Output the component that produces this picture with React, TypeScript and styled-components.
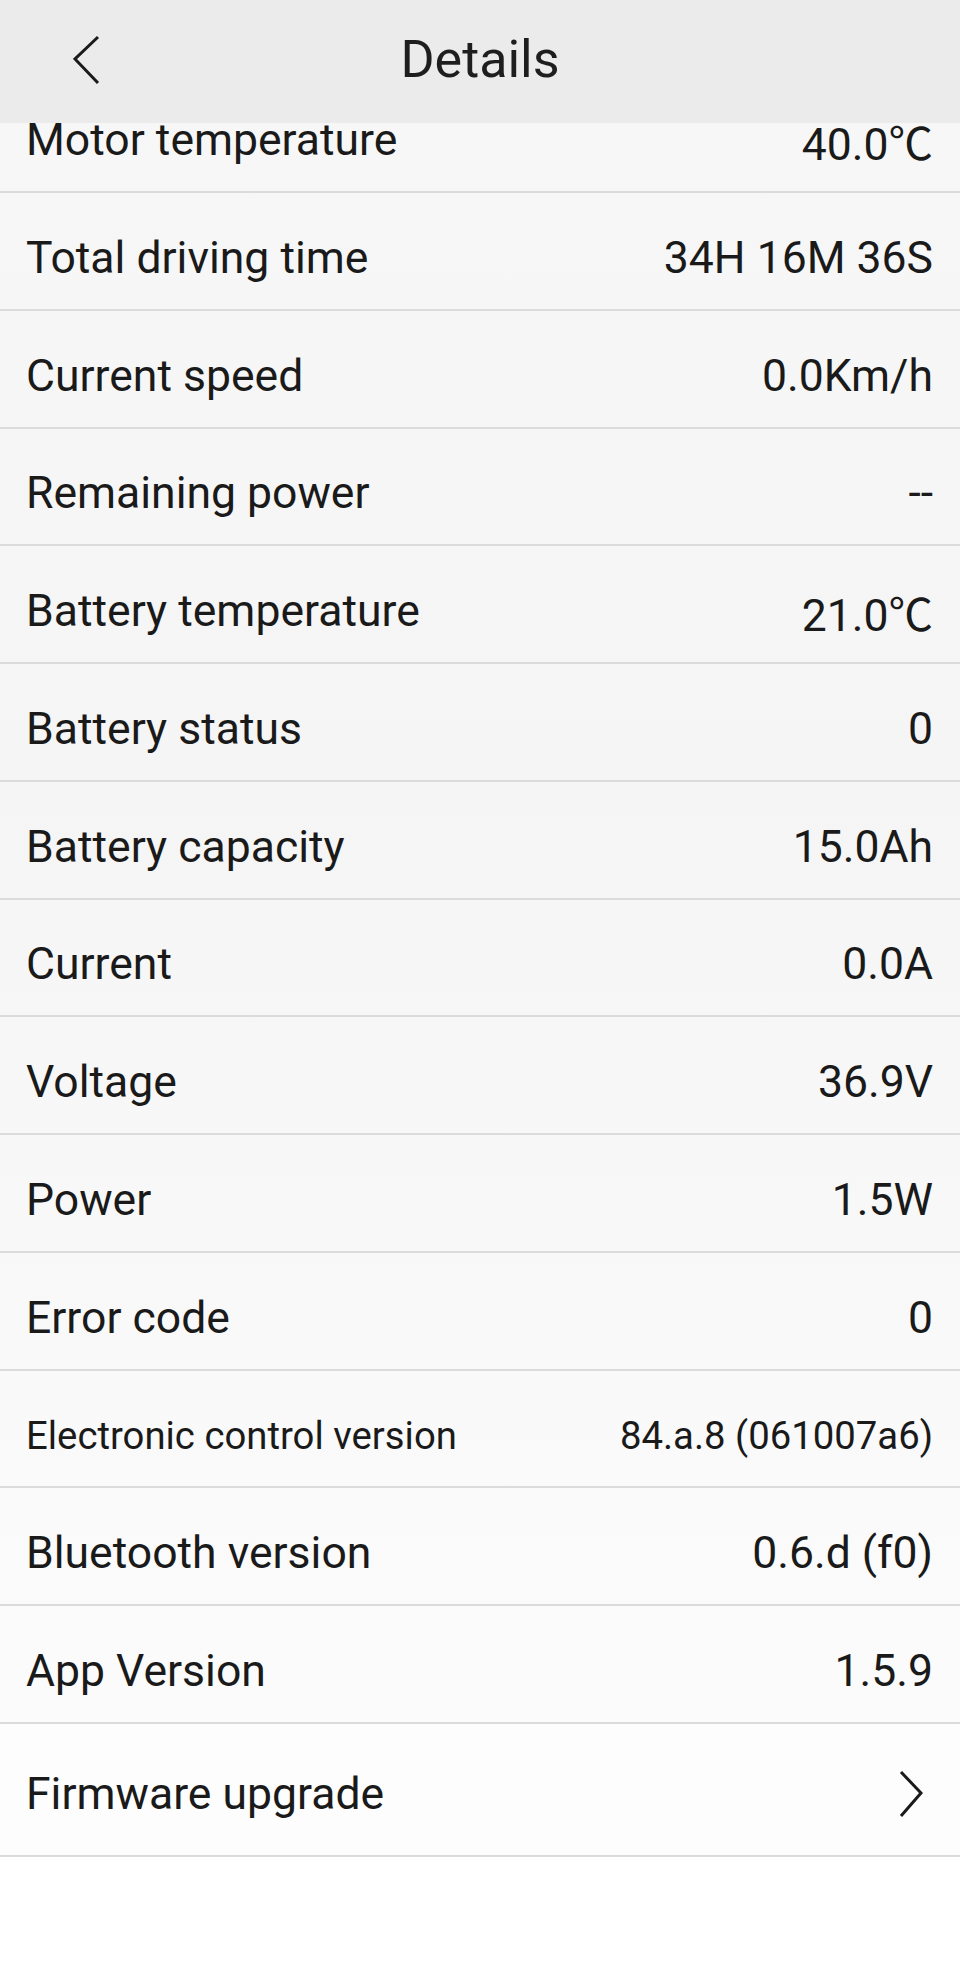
import styled, { createGlobalStyle } from 'styled-components';

type TypeRow = {
	label: string;
	value: string;
	small?: boolean;
};

const rows: TypeRow[] = [
	{ label: 'Motor temperature', value: '40.0℃' },
	{ label: 'Total driving time', value: '34H 16M 36S' },
	{ label: 'Current speed', value: '0.0Km/h' },
	{ label: 'Remaining power', value: '--' },
	{ label: 'Battery temperature', value: '21.0℃' },
	{ label: 'Battery status', value: '0' },
	{ label: 'Battery capacity', value: '15.0Ah' },
	{ label: 'Current', value: '0.0A' },
	{ label: 'Voltage', value: '36.9V' },
	{ label: 'Power', value: '1.5W' },
	{ label: 'Error code', value: '0' },
	{ label: 'Electronic control version', value: '84.a.8 (061007a6)', small: true },
	{ label: 'Bluetooth version', value: '0.6.d (f0)' },
	{ label: 'App Version', value: '1.5.9' },
];

const Details = () => {
	return (
		<>
			<GlobalStyle />
			<Page>
				<Header>
					<BackButton aria-label='Back'>
						<svg width='28' height='50' viewBox='0 0 28 50'>
							<polyline points='25,2 2,24 25,48' fill='none' stroke='#1a1a1a' strokeWidth='3' />
						</svg>
					</BackButton>
					<Title>Details</Title>
					<span />
				</Header>
				<Viewport>
					<List>
						{rows.map((row: TypeRow, idx: number) => (
							<Row key={idx}>
								<Label $small={row.small}>{row.label}</Label>
								<Value $small={row.small}>{row.value}</Value>
							</Row>
						))}
						<LinkRow>
							<Label>Firmware upgrade</Label>
							<Chevron width='24' height='48' viewBox='0 0 24 48'>
								<polyline points='2,2 22,23 2,46' fill='none' stroke='#1a1a1a' strokeWidth='3' />
							</Chevron>
						</LinkRow>
					</List>
				</Viewport>
			</Page>
		</>
	);
};

const GlobalStyle = createGlobalStyle`
	html, body {
		margin: 0;
		padding: 0;
		background: #ffffff;
	}
	body {
		font-family: Roboto, 'Noto Sans CJK SC', 'DejaVu Sans', sans-serif;
		color: #1a1a1a;
	}
`;

const Page = styled.div`
	width: 960px;
	min-height: 1981px;
	background: #ffffff;
`;

const Header = styled.header`
	display: grid;
	grid-template-columns: 1fr auto 1fr;
	align-items: center;
	height: 123px;
	box-sizing: border-box;
	padding-bottom: 4px;
	background: #ebebeb;
`;

const BackButton = styled.button`
	justify-self: start;
	display: flex;
	margin-left: 73px;
	padding: 0;
	border: none;
	background: none;
`;

const Title = styled.h1`
	margin: 0;
	font-size: 52px;
	font-weight: 400;
	color: #1e1e1e;
`;

const Viewport = styled.div`
	overflow: hidden;
`;

const List = styled.div`
	margin-top: -47.8px;
	background: linear-gradient(#f7f7f7, #f5f5f5 40%, #fafafa 80%, #fcfcfc);
`;

const Row = styled.div`
	display: flex;
	justify-content: space-between;
	align-items: center;
	box-sizing: border-box;
	height: 117.77px;
	padding: 14px 27px 0 26px;
	border-bottom: 2px solid #dbdbdb;
`;

const LinkRow = styled(Row)`
	height: 133px;
	padding-top: 10px;
	background: #fdfdfd;
`;

const Label = styled.span<{ $small?: boolean }>`
	font-size: ${({ $small }) => ($small ? '38.3px' : '44.5px')};
`;

const Value = styled.span<{ $small?: boolean }>`
	font-size: ${({ $small }) => ($small ? '38.3px' : '44.5px')};
`;

const Chevron = styled.svg`
	margin-right: 10px;
`;

export default Details;
